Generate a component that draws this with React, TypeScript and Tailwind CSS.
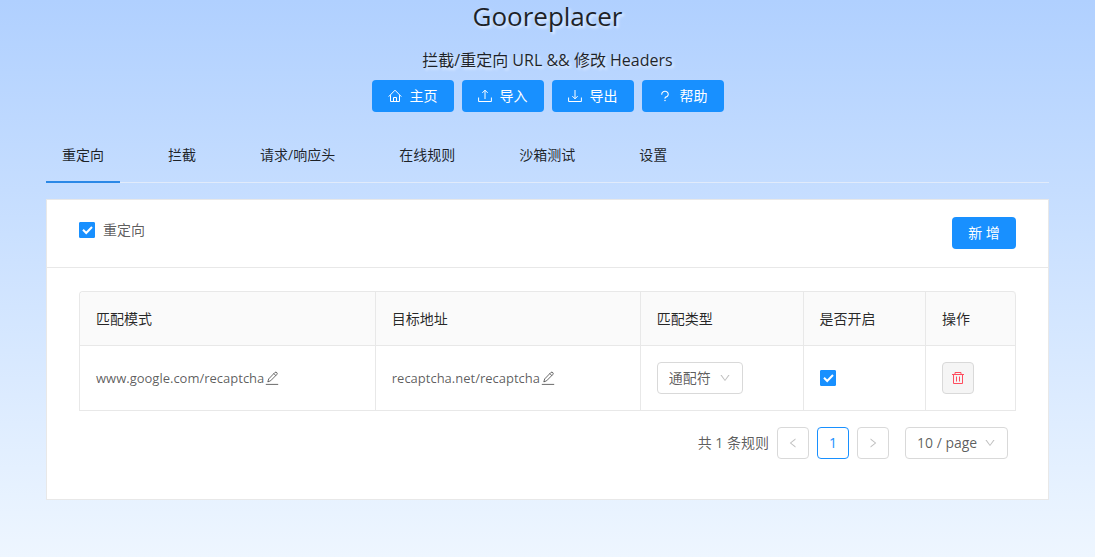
import React, { useState } from "react";
import {
  AiOutlineDown,
  AiOutlineLeft,
  AiOutlineQuestion,
  AiOutlineRight,
} from "react-icons/ai";

interface Rule {
  src: string;
  dst: string;
  kind: string;
  enable: boolean;
}

interface IconProps {
  className?: string;
}

const HomeIcon: React.FC<IconProps> = ({ className }) => (
  <svg viewBox="0 0 14 14" className={className} fill="none" stroke="currentColor">
    <path d="M0.7 7.6 L7 1.2 L13.3 7.6 M2.5 6.2 V12.5 H11.5 V6.2 M5.5 12.5 V8.5 H8.5 V12.5" />
  </svg>
);

const UploadIcon: React.FC<IconProps> = ({ className }) => (
  <svg viewBox="0 0 14 14" className={className} fill="none" stroke="currentColor">
    <path d="M0.6 8.5 V12.5 H13.4 V8.5 M7 10 V1.2 M4.3 3.9 L7 1.2 L9.7 3.9" />
  </svg>
);

const DownloadIcon: React.FC<IconProps> = ({ className }) => (
  <svg viewBox="0 0 14 14" className={className} fill="none" stroke="currentColor">
    <path d="M0.6 8.5 V12.5 H13.4 V8.5 M7 1 V9.8 M4.3 7.1 L7 9.8 L9.7 7.1" />
  </svg>
);

const EditIcon: React.FC<IconProps> = ({ className }) => (
  <svg
    viewBox="0 0 14 14"
    className={className}
    fill="none"
    stroke="currentColor"
    strokeWidth="0.9"
  >
    <path d="M0.8 13.4 H13.2 M2.8 10.9 L3.7 7.9 L9.9 1.5 Q10.9 0.7 11.8 1.6 Q12.6 2.5 11.8 3.5 L5.6 9.8 Z M8.9 2.6 L10.8 4.5" />
  </svg>
);

const DeleteIcon: React.FC<IconProps> = ({ className }) => (
  <svg viewBox="0 0 14 14" className={className} fill="none" stroke="currentColor">
    <path d="M1 3.5 H13 M4 3.5 V1.5 H10 V3.5 M2.5 3.5 V12.5 H11.5 V3.5 M5.5 5.5 V10.5 M8.5 5.5 V10.5" />
  </svg>
);

const actions = [
  { label: "主页", icon: HomeIcon },
  { label: "导入", icon: UploadIcon },
  { label: "导出", icon: DownloadIcon },
  { label: "帮助", icon: AiOutlineQuestion },
];

const tabs = ["重定向", "拦截", "请求/响应头", "在线规则", "沙箱测试", "设置"];

const rules: Rule[] = [
  {
    src: "www.google.com/recaptcha",
    dst: "recaptcha.net/recaptcha",
    kind: "通配符",
    enable: true,
  },
];

interface CheckboxProps {
  id: string;
  label?: string;
  defaultChecked?: boolean;
}

const Checkbox: React.FC<CheckboxProps> = ({ id, label, defaultChecked }) => (
  <span className="relative inline-flex w-4 h-4">
    <input
      id={id}
      type="checkbox"
      aria-label={label}
      defaultChecked={defaultChecked}
      className="peer appearance-none w-4 h-4 rounded-[1px] border border-[#d9d9d9] bg-white checked:bg-[#1890ff] checked:border-[#1890ff]"
    />
    <svg
      viewBox="0 0 16 16"
      className="absolute inset-0 w-4 h-4 hidden peer-checked:block pointer-events-none"
      fill="none"
      stroke="white"
      strokeWidth="2"
    >
      <path d="M4 7.8 L7.2 11 L13 5" />
    </svg>
  </span>
);

interface SelectProps {
  label: string;
  options: string[];
  className: string;
}

const Select: React.FC<SelectProps> = ({ label, options, className }) => (
  <span className={`relative inline-flex h-8 ${className}`}>
    <select
      aria-label={label}
      className="appearance-none w-full h-8 pl-[11px] pr-6 rounded border border-[#d9d9d9] bg-white"
    >
      {options.map((option) => (
        <option key={option}>{option}</option>
      ))}
    </select>
    <AiOutlineDown className="absolute right-3 top-[10px] w-3 h-3 text-black/25 pointer-events-none" />
  </span>
);

const EditableText: React.FC<{ text: string }> = ({ text }) => (
  <span className="flex items-center text-[13px]">
    {text}
    <button type="button" aria-label="编辑" className="ml-px">
      <EditIcon className="w-[14px] h-[14px]" />
    </button>
  </span>
);

const RuleTable: React.FC = () => (
  <table className="w-full table-fixed border-separate border-spacing-0 border-t border-l border-[#e8e8e8] rounded-t">
    <colgroup>
      <col className="w-[31.6%]" />
      <col className="w-[28.3%]" />
      <col className="w-[17.4%]" />
      <col className="w-[13.1%]" />
      <col className="w-[9.6%]" />
    </colgroup>
    <thead>
      <tr className="text-left text-black/85">
        {["匹配模式", "目标地址", "匹配类型", "是否开启", "操作"].map((title) => (
          <th
            key={title}
            className="h-[54px] px-4 font-normal bg-[#fafafa] border-r border-b border-[#e8e8e8] first:rounded-tl last:rounded-tr"
          >
            {title}
          </th>
        ))}
      </tr>
    </thead>
    <tbody>
      {rules.map((rule) => (
        <tr
          key={rule.src}
          className="*:h-[65px] *:px-4 *:border-r *:border-b *:border-[#e8e8e8]"
        >
          <td>
            <EditableText text={rule.src} />
          </td>
          <td>
            <EditableText text={rule.dst} />
          </td>
          <td>
            <Select
              label="匹配类型"
              options={[rule.kind, "正则式"]}
              className="w-[86px] align-middle"
            />
          </td>
          <td>
            <span className="flex">
              <Checkbox
                id="rule-enable"
                label="是否开启"
                defaultChecked={rule.enable}
              />
            </span>
          </td>
          <td>
            <button
              type="button"
              aria-label="删除"
              className="flex items-center justify-center w-8 h-8 rounded border border-[#d9d9d9] bg-[#f5f5f5] text-[#ff4d5f]"
            >
              <DeleteIcon className="w-[14px] h-[14px]" />
            </button>
          </td>
        </tr>
      ))}
    </tbody>
  </table>
);

const Pagination: React.FC = () => (
  <div className="flex items-center justify-end gap-2 mt-4 pr-2">
    <span>共 1 条规则</span>
    <button
      type="button"
      aria-label="上一页"
      disabled
      className="flex items-center justify-center w-8 h-8 rounded border border-[#d9d9d9] text-black/25"
    >
      <AiOutlineLeft className="w-3 h-3" />
    </button>
    <button
      type="button"
      className="w-8 h-8 rounded border border-[#1890ff] text-[#1890ff]"
    >
      1
    </button>
    <button
      type="button"
      aria-label="下一页"
      disabled
      className="flex items-center justify-center w-8 h-8 rounded border border-[#d9d9d9] text-black/25"
    >
      <AiOutlineRight className="w-3 h-3" />
    </button>
    <Select
      label="每页条数"
      options={["10 / page", "20 / page"]}
      className="w-[103px] ml-2"
    />
  </div>
);

const App: React.FC = () => {
  const [active, setActive] = useState(tabs[0]);

  return (
    <div className="min-h-screen px-[46px] bg-linear-to-b from-[#b0d0ff] to-[#eef6ff] font-['Open_Sans','Noto_Sans_CJK_SC',sans-serif] text-sm text-black/65">
      <header className="flex flex-col items-center text-black/85 text-shadow-[2px_2px_3px_rgba(255,255,255,0.7)]">
        <h1 className="text-[26px] leading-8">Gooreplacer</h1>
        <p className="mt-4 text-base leading-6">拦截/重定向 URL &amp;&amp; 修改 Headers</p>
      </header>
      <div className="flex justify-center gap-2 mt-2">
        {actions.map(({ label, icon: Icon }) => (
          <button
            key={label}
            type="button"
            className="flex items-center justify-center gap-2 w-[82px] h-8 rounded bg-[#1890ff] text-white"
          >
            <Icon className="w-[14px] h-[14px]" />
            {label}
          </button>
        ))}
      </div>

      <nav className="flex gap-8 mt-4 border-b border-[#e1ebfb]">
        {tabs.map((tab) => (
          <button
            key={tab}
            type="button"
            onClick={() => setActive(tab)}
            className={`h-[55px] -mb-px px-4 border-b-2 text-black/85 ${
              tab === active ? "border-[#2b88e6]" : "border-transparent"
            }`}
          >
            {tab}
          </button>
        ))}
      </nav>

      <main className="mt-4 bg-white border border-[#e8e8e8]">
        <div className="flex items-start justify-between px-8 pt-[17px] pb-[18px] border-b border-[#e8e8e8]">
          <label htmlFor="redirect-enable" className="flex items-center gap-2 h-[26px]">
            <Checkbox id="redirect-enable" defaultChecked />
            重定向
          </label>
          <button
            type="button"
            className="w-16 h-8 rounded bg-[#1890ff] text-white"
          >
            新 增
          </button>
        </div>
        <div className="px-8 pt-[23px] pb-10">
          <RuleTable />
          <Pagination />
        </div>
      </main>
    </div>
  );
};

export default App;
